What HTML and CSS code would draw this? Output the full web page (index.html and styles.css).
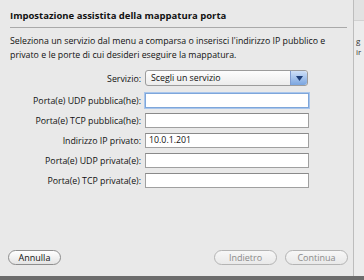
FILE: index.html
```html
<!DOCTYPE html>
<html>
<head>
  <title>Impostazione assistita della mappatura porta</title>
  <link rel="stylesheet" href="styles.css">
</head>
<body>
  <div class="desk">
    <div class="sheet">
      <h1 class="sheet-title">Impostazione assistita della mappatura porta</h1>
      <p class="intro">Seleziona un servizio dal menu a comparsa o inserisci l'indirizzo IP pubblico e privato e le porte di cui desideri eseguire la mappatura.</p>

      <div class="fields">
        <label class="lbl">Servizio:</label>
        <div class="popup">
          <span>Scegli un servizio</span>
          <span class="popup-arrow"><svg width="7" height="5" viewBox="0 0 7 5"><path d="M0 0 L7 0 L3.5 5 Z" fill="#1d3e78"/></svg></span>
        </div>

        <label class="lbl">Porta(e) UDP pubblica(he):</label>
        <div class="field focused"></div>

        <label class="lbl">Porta(e) TCP pubblica(he):</label>
        <div class="field"></div>

        <label class="lbl">Indirizzo IP privato:</label>
        <div class="field">10.0.1.201</div>

        <label class="lbl">Porta(e) UDP privata(e):</label>
        <div class="field"></div>

        <label class="lbl">Porta(e) TCP privata(e):</label>
        <div class="field"></div>
      </div>

      <div class="buttons">
        <button class="pill">Annulla</button>
        <div class="right">
          <button class="pill disabled">Indietro</button>
          <button class="pill disabled">Continua</button>
        </div>
      </div>
    </div>
    <div class="behind">
      <div class="behind-bar"></div>
      <div class="behind-text">g<br>ir</div>
    </div>
  </div>
  <div class="dock"></div>
</body>
</html>
```

FILE: styles.css
```css
body {
  margin: 0;
  width: 364px;
  height: 280px;
  overflow: hidden;
  font-family: "Open Sans", "DejaVu Sans", sans-serif;
  font-size: 8.8px;
  color: #111;
  background: #e6e6e6;
}

.desk {
  display: flex;
  height: 276px;
}

.sheet {
  width: 343px;
  padding: 0 0 0 10px;
  background: #e9e9e9;
  border-right: 1px solid #bdbdbd;
  display: flex;
  flex-direction: column;
}

.sheet-title {
  margin: 0;
  padding: 9px 0 5px;
  font-size: 9.5px;
  font-weight: bold;
  border-bottom: 1px solid #a9a9a9;
  width: 337px;
}

.intro {
  margin: 6px 0 0;
  width: 340px;
  line-height: 14px;
}

.fields {
  display: grid;
  grid-template-columns: 131px 163px;
  column-gap: 4px;
  row-gap: 5px;
  margin-top: 8px;
  align-items: center;
}

.lbl {
  text-align: right;
}

.popup {
  height: 14px;
  border: 1px solid #9c9c9c;
  border-radius: 3px;
  background: linear-gradient(#fdfdfd, #ececec);
  display: flex;
  align-items: center;
  justify-content: space-between;
  padding-left: 5px;
  margin-bottom: 2px;
}

.popup-arrow {
  width: 16px;
  height: 14px;
  border-left: 1px solid #7f9ccf;
  border-radius: 0 3px 3px 0;
  background: linear-gradient(#cfe0f7, #7aa5e0);
  display: flex;
  align-items: center;
  justify-content: center;
}

.field {
  height: 13px;
  width: 159px;
  border: 1px solid #a0a0a0;
  border-top-color: #8a8a8a;
  background: #fff;
  padding-left: 3px;
  line-height: 13px;
}

.field.focused {
  border-color: #7ea6da;
  box-shadow: 0 0 0 1px #a9c6ec;
}

.buttons {
  margin-top: auto;
  margin-bottom: 11px;
  display: flex;
  justify-content: space-between;
  padding-right: 5px;
  margin-left: -2px;
}

.right {
  display: flex;
  gap: 8px;
}

.pill {
  font-family: inherit;
  font-size: 9px;
  color: #111;
  height: 15px;
  width: 53px;
  padding: 0;
  border: 1px solid #8e8e8e;
  border-radius: 8px;
  background: linear-gradient(#ffffff, #e4e4e4);
  line-height: 13px;
}

.pill.disabled {
  width: 63px;
  color: #8a8a8a;
  border-color: #b4b4b4;
  background: linear-gradient(#f7f7f7, #e9e9e9);
}

.behind {
  flex: 1;
  overflow: hidden;
  background: #ececec;
}

.behind-bar {
  height: 20px;
  background: #e2e2e2;
  border-bottom: 1px solid #d2d2d2;
}

.behind-text {
  margin-top: 14px;
  padding-left: 2px;
  font-size: 8px;
  line-height: 11px;
  color: #333;
}

.dock {
  height: 4px;
  background: #6c6c6c;
}
```
